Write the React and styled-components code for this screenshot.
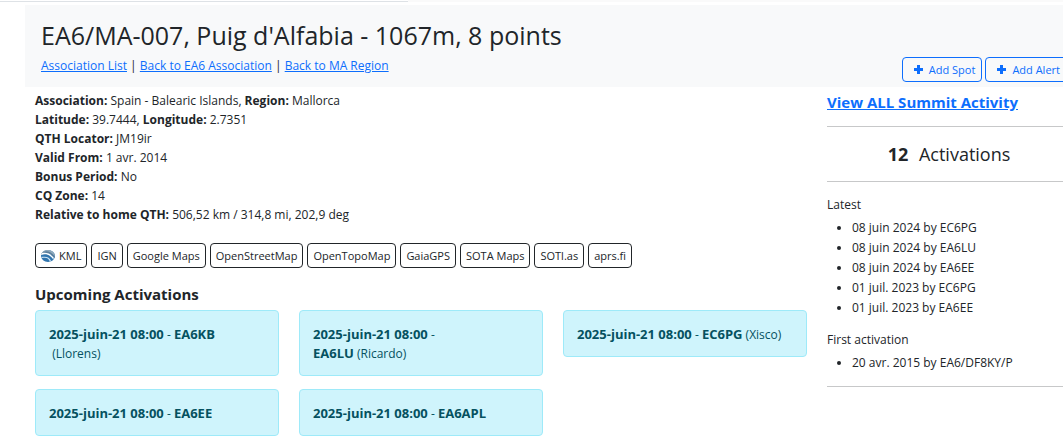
import React from 'react'
import styled, { createGlobalStyle } from 'styled-components'

const GlobalStyle = createGlobalStyle`
  *, *::before, *::after {
    box-sizing: border-box;
  }
  body {
    margin: 0;
    overflow-x: hidden;
    background: #fff;
    color: #212529;
    font-family: "Open Sans", "Noto Sans", sans-serif;
    font-size: 12px;
    line-height: 19px;
  }
  a {
    color: #0d6efd;
  }
`

const TopBar = styled.div`
  height: 2px;
  margin-bottom: 3px;
  background: #fafafa;
`

const TopRule = styled.div`
  width: 408px;
  height: 2px;
  border-bottom: 1px solid #dee2e6;
  background: #fff;
`

// The page runs under the right edge of the window
const Page = styled.div`
  margin: 0 -18px 0 25px;
`

const Header = styled.header`
  display: flex;
  justify-content: space-between;
  align-items: flex-end;
  padding: 12px 14px 5px 16px;
  background: #f8f9fa;
`

const Title = styled.h1`
  margin: 0 0 3px;
  font-size: 25px;
  font-weight: 400;
  line-height: 36px;
`

const Crumbs = styled.nav`
  padding-bottom: 7px;
`

const Actions = styled.div`
  display: flex;
  gap: 3px;
`

const Button = styled.button`
  display: inline-flex;
  align-items: center;
  gap: 4px;
  height: 25px;
  padding: 0 ${({ $primary }) => ($primary ? '6px 0 9px' : '5px')};
  border: 1px solid ${({ $primary }) => ($primary ? '#0d6efd' : '#212529')};
  border-radius: 4px;
  background: transparent;
  color: ${({ $primary }) => ($primary ? '#0d6efd' : '#212529')};
  font-family: inherit;
  font-size: 11px;
  line-height: 16px;
  white-space: nowrap;
  cursor: pointer;
`

const Columns = styled.div`
  display: grid;
  grid-template-columns: repeat(4, 1fr);
  column-gap: 20px;
  padding: 0 10px;
`

const Main = styled.main`
  grid-column: span 3;
  padding-top: 4px;
`

const Details = styled.div`
  margin-bottom: 19px;
`

const Toolbar = styled.div`
  display: flex;
  flex-wrap: wrap;
  gap: 4px;
  margin-bottom: 16px;
`

const Heading = styled.h2`
  margin: 0 0 5px;
  font-size: 15px;
  font-weight: 700;
  line-height: 21px;
`

const AlertGrid = styled.div`
  display: grid;
  grid-template-columns: repeat(3, 1fr);
  align-items: start;
  gap: 13px 20px;
`

const AlertCard = styled.div`
  padding: 14px 13px 12px;
  border: 1px solid #9eeaf9;
  border-radius: 4px;
  background: #cff4fc;
  color: #055160;
  white-space: pre-wrap;

  strong {
    font-size: 13px;
  }
`

const Sidebar = styled.aside`
  padding-top: 4px;
`

const ActivityLink = styled.a`
  display: block;
  font-size: 15px;
  font-weight: 700;
  line-height: 22px;
`

const Rule = styled.hr`
  margin: 13px 0;
  border: 0;
  border-top: 1px solid #c7c8c9;
`

const Count = styled.div`
  font-size: 18px;
  line-height: 28px;
  text-align: center;

  strong {
    margin-right: 6px;
  }
`

const ListTitle = styled.div`
  margin-bottom: 4px;
`

const List = styled.ul`
  margin: 0 0 12px;
  padding-left: 25px;
  line-height: 20px;
`

const details = [
  [['Association', 'Spain - Balearic Islands'], ['Region', 'Mallorca']],
  [['Latitude', '39.7444'], ['Longitude', '2.7351']],
  [['QTH Locator', 'JM19ir']],
  [['Valid From', '1 avr. 2014']],
  [['Bonus Period', 'No']],
  [['CQ Zone', '14']],
  [['Relative to home QTH', '506,52 km / 314,8 mi, 202,9 deg']],
]

const maps = ['IGN', 'Google Maps', 'OpenStreetMap', 'OpenTopoMap', 'GaiaGPS', 'SOTA Maps', 'SOTl.as', 'aprs.fi']

const alerts = [
  { call: 'EA6KB', after: '\n (Llorens)' },
  { call: 'EA6LU', before: '\n', after: ' (Ricardo)' },
  { call: 'EC6PG', after: ' (Xisco)' },
  { call: 'EA6EE' },
  { call: 'EA6APL' },
]

const latest = [
  '08 juin 2024 by EC6PG',
  '08 juin 2024 by EA6LU',
  '08 juin 2024 by EA6EE',
  '01 juil. 2023 by EC6PG',
  '01 juil. 2023 by EA6EE',
]

const PlusIcon = () => (
  <svg width="13" height="13" viewBox="0 0 13 13" aria-hidden="true">
    <path d="M5 2h3v3h3v3H8v3H5V8H2V5h3z" fill="currentColor" />
  </svg>
)

const EarthIcon = () => (
  <svg width="14" height="14" viewBox="0 0 14 14" aria-hidden="true">
    <ellipse cx="7" cy="7" rx="7" ry="6" fill="#2f74ae" />
    <path d="M0 6C1 2 4 1 7 1c4 0 7 3 7 7C11 4 6 3 0 6z" fill="#8fa9bb" />
    <path d="M1 5C5 3 10 4 13 9l1-1C11 3 6 1 2 3z" fill="#5c7f9c" />
    <path d="M0 6c5-2 9 0 12 4l1-1C10 5 6 3 1 4z" fill="#fff" />
    <path d="M1 9c4-1 7 0 8 4l1-1C9 8 5 7 0 8z" fill="#cfe5f4" />
  </svg>
)

const App = () => {
  return (
    <>
      <GlobalStyle />
      <TopBar><TopRule /></TopBar>
      <Page>
        <Header>
          <div>
            <Title>EA6/MA-007, Puig d'Alfabia - 1067m, 8 points</Title>
            <Crumbs>
              <a href="#associations">Association List</a> | <a href="#ea6">Back to EA6 Association</a> |{' '}
              <a href="#ma">Back to MA Region</a>
            </Crumbs>
          </div>
          <Actions>
            <Button $primary><PlusIcon />Add Spot</Button>
            <Button $primary><PlusIcon />Add Alert</Button>
          </Actions>
        </Header>
        <Columns>
          <Main>
            <Details>
              {details.map((row) => (
                <div key={row[0][0]}>
                  {row.map(([label, value], i) => (
                    <React.Fragment key={label}>
                      {i > 0 && ', '}<strong>{label}:</strong> {value}
                    </React.Fragment>
                  ))}
                </div>
              ))}
            </Details>
            <Toolbar>
              <Button><EarthIcon />KML</Button>
              {maps.map((name) => <Button key={name}>{name}</Button>)}
            </Toolbar>
            <Heading>Upcoming Activations</Heading>
            <AlertGrid>
              {alerts.map(({ call, before = '', after = '' }) => (
                <AlertCard key={call}>
                  <strong>2025-juin-21 08:00</strong> - {before}<strong>{call}</strong>{after}
                </AlertCard>
              ))}
            </AlertGrid>
          </Main>
          <Sidebar>
            <ActivityLink href="#activity">View ALL Summit Activity</ActivityLink>
            <Rule />
            <Count><strong>12</strong> Activations</Count>
            <Rule />
            <ListTitle>Latest</ListTitle>
            <List>
              {latest.map((item) => <li key={item}>{item}</li>)}
            </List>
            <ListTitle>First activation</ListTitle>
            <List>
              <li>20 avr. 2015 by EA6/DF8KY/P</li>
            </List>
            <Rule />
          </Sidebar>
        </Columns>
      </Page>
    </>
  )
}

export default App
